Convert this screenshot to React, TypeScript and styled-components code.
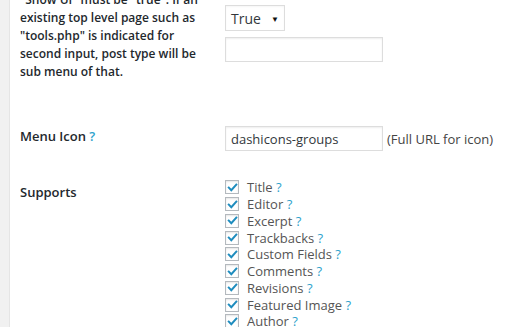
import React from "react";
import styled, { createGlobalStyle } from "styled-components";

const Global = createGlobalStyle`
  html, body { margin: 0; padding: 0; background: #fff; }
  body { font-family: "Open Sans", "Noto Sans", sans-serif; font-size: 13px; color: #444; }
`;

const Page = styled.div`
  display: flex;
  width: 520px;
  height: 327px;
  overflow: hidden;
`;

const Strip = styled.div`
  width: 9px;
  flex: none;
  background: #f1f1f1;
  border-right: 1px solid #e5e5e5;
`;

const Content = styled.div`
  flex: 1;
  padding-left: 10px;
  margin-top: -9px;
  display: flex;
  flex-direction: column;
`;

const Row = styled.div<{ $mt?: number }>`
  display: grid;
  grid-template-columns: 205px 1fr;
  margin-top: ${(p) => p.$mt ?? 0}px;
`;

const Label = styled.div<{ $small?: boolean; $pt?: number }>`
  font-size: ${(p) => (p.$small ? 12 : 13)}px;
  line-height: 18px;
  font-weight: 600;
  color: #23282d;
  padding-top: ${(p) => p.$pt ?? 0}px;
`;

const Help = styled.span<{ $light?: boolean }>`
  color: #2ea2cc;
  font-weight: ${(p) => (p.$light ? 400 : 600)};
`;

const Cell = styled.div<{ $pt?: number }>`
  display: flex;
  flex-direction: column;
  align-items: flex-start;
  gap: 6px;
  padding-top: ${(p) => p.$pt ?? 0}px;
`;

const Select = styled.div`
  width: 60px;
  height: 26px;
  box-sizing: border-box;
  border: 1px solid #ddd;
  display: flex;
  align-items: center;
  justify-content: space-between;
  padding: 0 5px 0 5px;
  color: #32373c;
  font-size: 14px;
  box-shadow: inset 0 1px 2px rgba(0,0,0,0.04);
`;

const Arrow = styled.span`
  font-size: 8px;
  color: #111;
`;

const Input = styled.div`
  width: 158px;
  height: 25px;
  box-sizing: border-box;
  border: 1px solid #ddd;
  box-shadow: inset 0 1px 2px rgba(0,0,0,0.07);
  display: flex;
  align-items: center;
  padding-left: 5px;
  color: #32373c;
  font-size: 13px;
`;

const InlineRow = styled.div`
  display: flex;
  align-items: center;
  gap: 4px;
`;

const Note = styled.span`
  color: #444;
  font-size: 13px;
`;

const CheckList = styled.div`
  display: flex;
  flex-direction: column;
`;

const CheckItem = styled.div`
  display: flex;
  align-items: center;
  height: 16.75px;
  gap: 8px;
  font-size: 13px;
  color: #555;
`;

const Box = styled.span`
  width: 14px;
  height: 14px;
  box-sizing: border-box;
  border: 1px solid #b4b9be;
  background: #fff;
  display: flex;
  align-items: center;
  justify-content: center;
  box-shadow: inset 0 1px 2px rgba(0,0,0,0.1);
`;

const Check = () => (
  <svg width="11" height="11" viewBox="0 0 11 11">
    <path d="M1.8 5.6 L4.3 8.2 L9.3 2.6" fill="none" stroke="#1e8cbe" strokeWidth="2" strokeLinecap="square" />
  </svg>
);

const supports = [
  "Title",
  "Editor",
  "Excerpt",
  "Trackbacks",
  "Custom Fields",
  "Comments",
  "Revisions",
  "Featured Image",
  "Author",
];

export default function App() {
  return (
    <>
      <Global />
      <Page>
        <Strip />
        <Content>
          <Row>
            <Label $small>
              "Show UI" must be "true". If an
              <br />
              existing top level page such as
              <br />
              "tools.php" is indicated for
              <br />
              second input, post type will be
              <br />
              sub menu of that.
            </Label>
            <Cell $pt={14}>
              <Select>
                True <Arrow>▼</Arrow>
              </Select>
              <Input />
            </Cell>
          </Row>
          <Row $mt={34}>
            <Label $pt={12}>
              Menu Icon <Help>?</Help>
            </Label>
            <Cell $pt={11}>
              <InlineRow>
                <Input>dashicons-groups</Input>
                <Note>(Full URL for icon)</Note>
              </InlineRow>
            </Cell>
          </Row>
          <Row $mt={25}>
            <Label $pt={7}>Supports</Label>
            <Cell $pt={3}>
              <CheckList>
                {supports.map((s) => (
                  <CheckItem key={s}>
                    <Box>
                      <Check />
                    </Box>
                    <span>
                      {s} <Help $light>?</Help>
                    </span>
                  </CheckItem>
                ))}
              </CheckList>
            </Cell>
          </Row>
        </Content>
      </Page>
    </>
  );
}
